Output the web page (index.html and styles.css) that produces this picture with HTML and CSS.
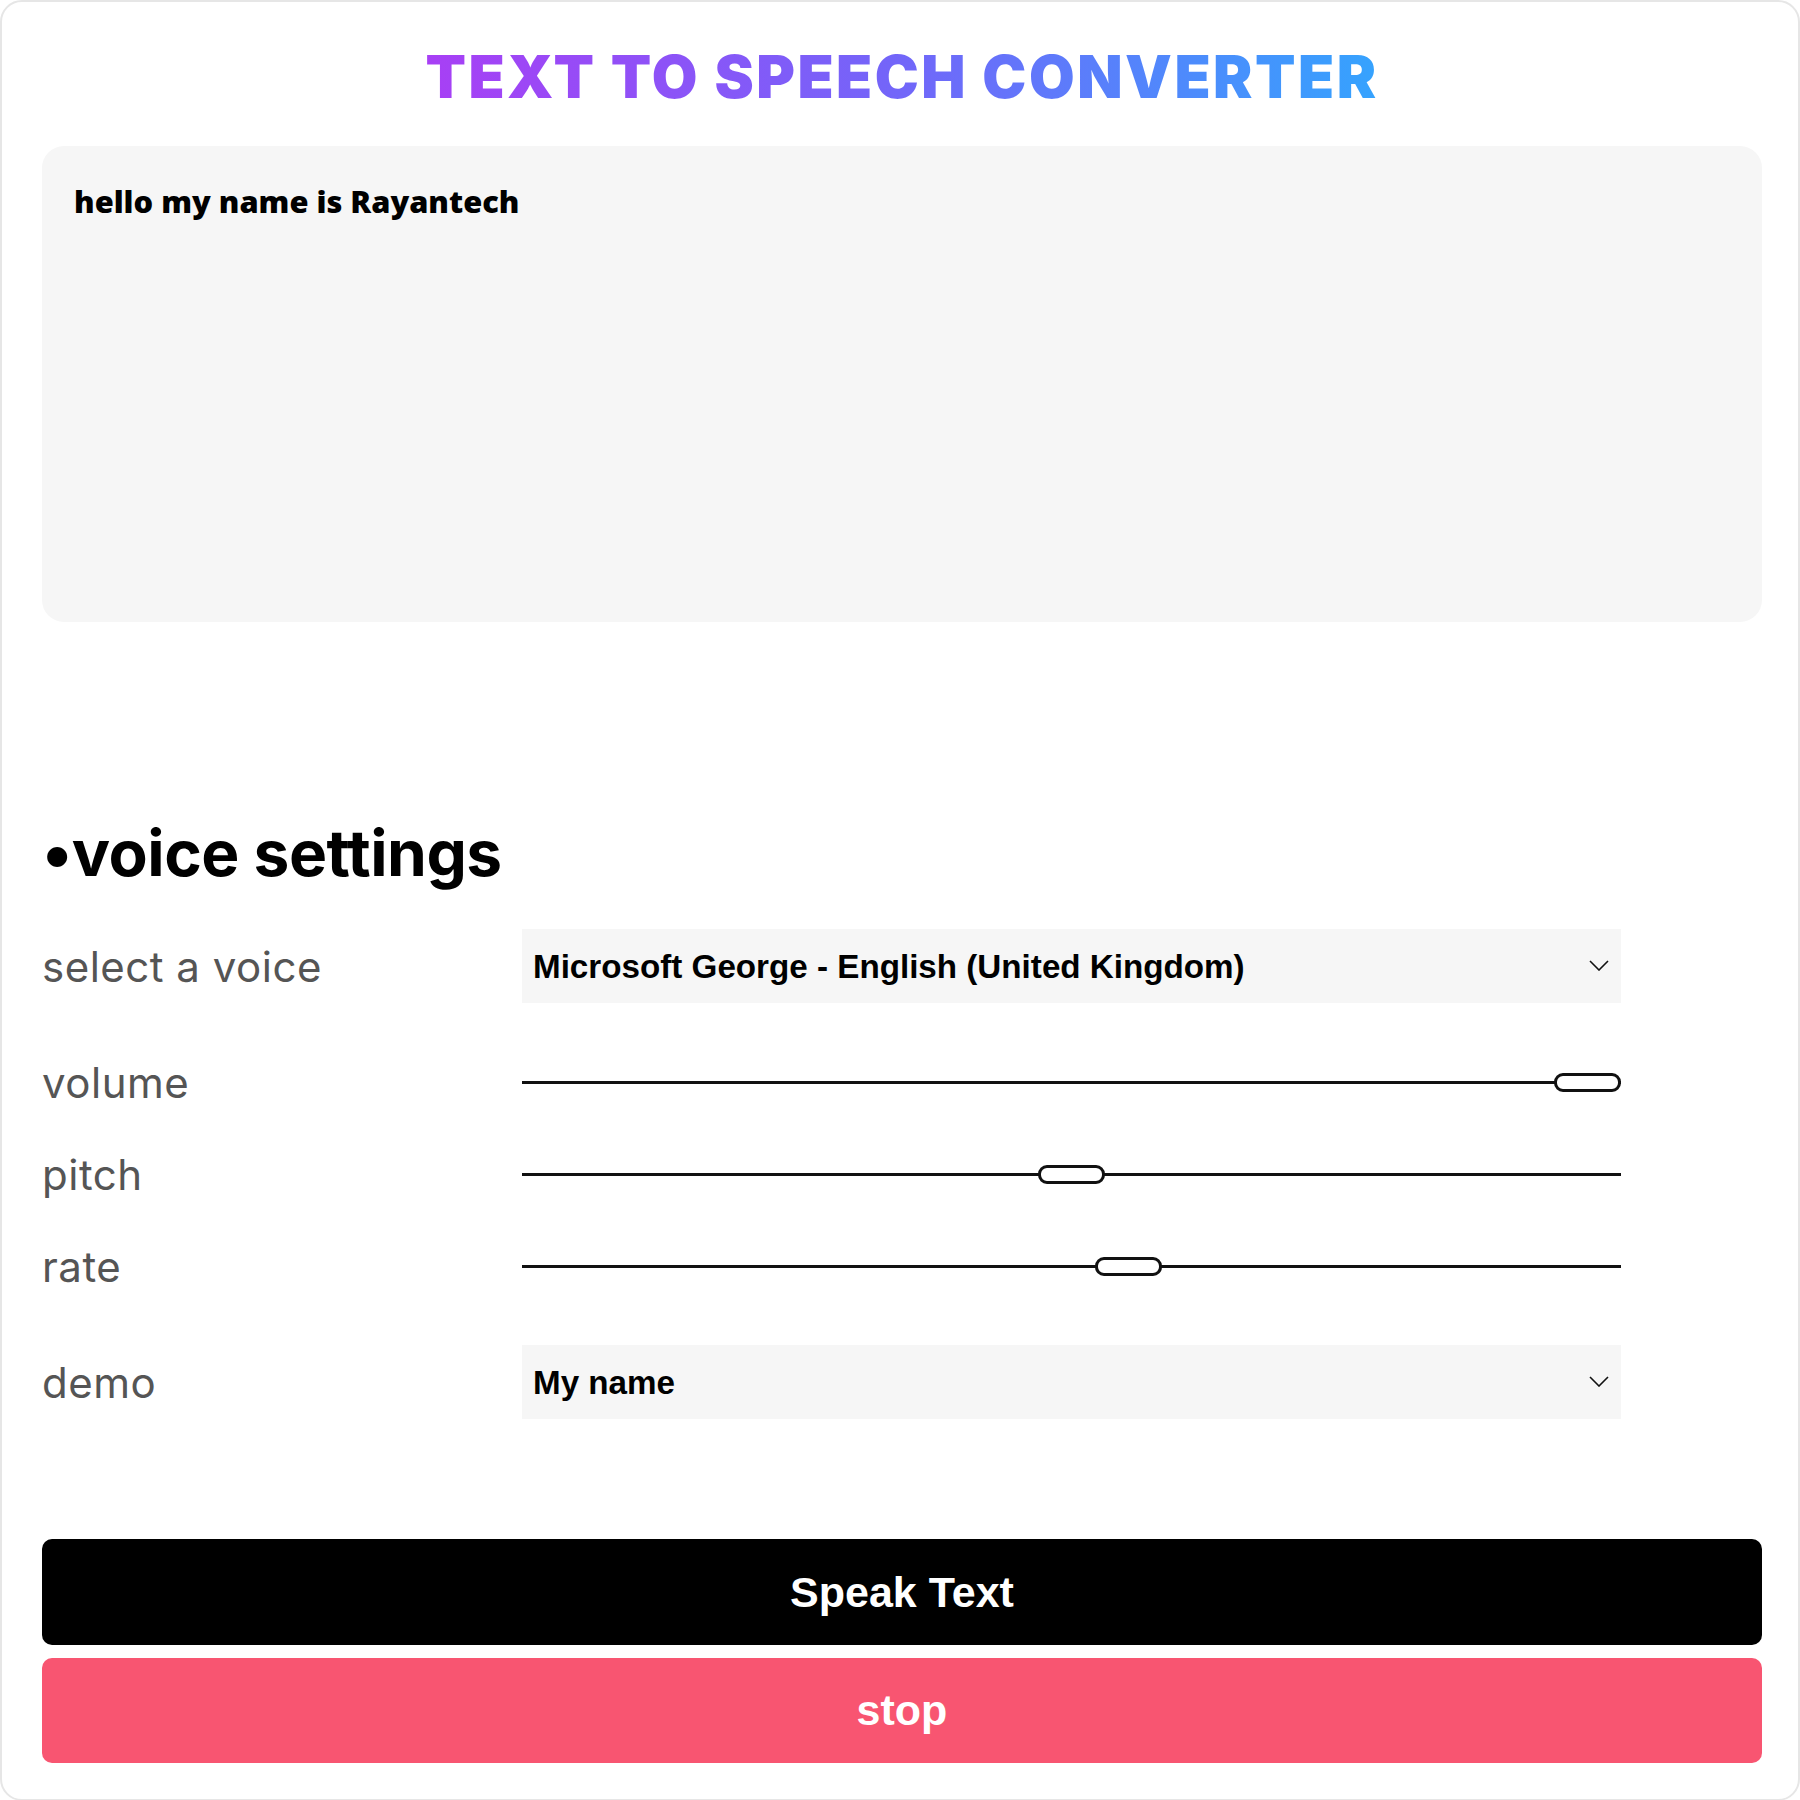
FILE: index.html
```html
<!DOCTYPE html>
<html lang="en">
<head>
<meta charset="utf-8">
<title>Text to Speech Converter</title>
<link rel="stylesheet" href="styles.css">
</head>
<body>
<main class="app">
  <h1 class="title"><span class="title-text">TEXT TO SPEECH CONVERTER</span></h1>
  <textarea class="text-input">hello my name is Rayantech</textarea>

  <h2 class="section-title">•voice settings</h2>

  <div class="settings">
    <div class="row select-row">
      <label class="label">select a voice</label>
      <div class="select-wrap">
        <select class="select">
          <option>Microsoft George - English (United Kingdom)</option>
        </select>
        <svg class="chevron" viewBox="0 0 20 11" width="20" height="11"><path d="M1 1 L10 10 L19 1" fill="none" stroke="#111" stroke-width="1.6"/></svg>
      </div>
    </div>

    <div class="ranges">
      <div class="row range-row">
        <label class="label">volume</label>
        <input class="range" type="range" min="0" max="1" step="0.1" value="1">
      </div>
      <div class="row range-row">
        <label class="label">pitch</label>
        <input class="range" type="range" min="0" max="2" step="0.1" value="1">
      </div>
      <div class="row range-row">
        <label class="label">rate</label>
        <input class="range" type="range" min="0" max="1.8" step="0.1" value="1">
      </div>
    </div>

    <div class="row select-row">
      <label class="label">demo</label>
      <div class="select-wrap">
        <select class="select">
          <option>My name</option>
        </select>
        <svg class="chevron" viewBox="0 0 20 11" width="20" height="11"><path d="M1 1 L10 10 L19 1" fill="none" stroke="#111" stroke-width="1.6"/></svg>
      </div>
    </div>
  </div>

  <div class="actions">
    <button class="btn btn-speak">Speak Text</button>
    <button class="btn btn-stop">stop</button>
  </div>
</main>
</body>
</html>
```
FILE: styles.css
```css
* { box-sizing: border-box; }

html, body {
  margin: 0;
  padding: 0;
  background: #ffffff;
}

.app {
  width: 1800px;
  min-height: 1800px;
  border: 2px solid #e6e6e6;
  border-radius: 22px;
  padding: 45px 36px 36px 40px;
  display: flex;
  flex-direction: column;
  background: #fff;
}

.title {
  margin: 0;
  text-align: center;
  font-family: "Inter", "Lato", sans-serif;
  font-weight: 900;
  font-size: 59px;
  line-height: 59px;
  letter-spacing: 2.5px;
}

.title-text {
  display: inline-block;
  background: linear-gradient(90deg, #a83ff5 0%, #7266f9 50%, #35a3fe 100%);
  -webkit-background-clip: text;
  background-clip: text;
  color: transparent;
}

.text-input {
  display: block;
  margin-top: 40px;
  width: 100%;
  height: 476px;
  border: none;
  outline: none;
  resize: none;
  border-radius: 22px;
  background: #f6f6f6;
  padding: 37px 32px;
  font-family: "Open Sans", "Noto Sans", sans-serif;
  font-weight: 800;
  font-size: 30.8px;
  line-height: 36px;
  color: #000;
}

.section-title {
  margin: 199px 0 0 0;
  font-family: "Inter", "Roboto", sans-serif;
  font-weight: 700;
  font-size: 64px;
  line-height: 64px;
  letter-spacing: -0.5px;
  color: #000;
}

.settings {
  margin-top: 44px;
  display: flex;
  flex-direction: column;
}

.row {
  display: flex;
  align-items: center;
}

.select-row { height: 74px; }

.ranges {
  padding: 33px 0;
  display: flex;
  flex-direction: column;
}

.range-row { height: 92px; }

.label {
  width: 480px;
  flex: none;
  font-family: "Inter", "Open Sans", sans-serif;
  font-weight: 400;
  font-size: 42px;
  letter-spacing: 0.5px;
  color: #555555;
}

.select-wrap {
  position: relative;
  width: 1099px;
  height: 74px;
}

.select {
  -webkit-appearance: none;
  appearance: none;
  width: 100%;
  height: 100%;
  border: none;
  border-radius: 0;
  outline: none;
  background: #f6f6f6;
  padding: 0 40px 0 11px;
  font-family: "Liberation Sans", Arial, sans-serif;
  font-weight: 700;
  font-size: 33.2px;
  color: #000;
}

.chevron {
  position: absolute;
  right: 12px;
  top: 31px;
  pointer-events: none;
}

.range {
  -webkit-appearance: none;
  appearance: none;
  width: 1099px;
  height: 19px;
  margin: 0;
  padding: 0;
  background: transparent;
}

.range::-webkit-slider-runnable-track {
  height: 3px;
  background: #111;
  border: none;
}

.range::-webkit-slider-thumb {
  -webkit-appearance: none;
  appearance: none;
  box-sizing: border-box;
  width: 67px;
  height: 19px;
  margin-top: -8px;
  border: 3px solid #111;
  border-radius: 9px;
  background: #fff;
}

.actions {
  margin-top: 120px;
  display: flex;
  flex-direction: column;
  gap: 13px;
}

.btn {
  width: 100%;
  height: 106px;
  border: none;
  border-radius: 10px;
  font-family: "Liberation Sans", Arial, sans-serif;
  font-weight: 700;
  font-size: 43px;
  color: #fff;
  cursor: pointer;
}

.btn-speak { background: #000; }

.btn-stop {
  background: #f85571;
  height: 105px;
}
```
